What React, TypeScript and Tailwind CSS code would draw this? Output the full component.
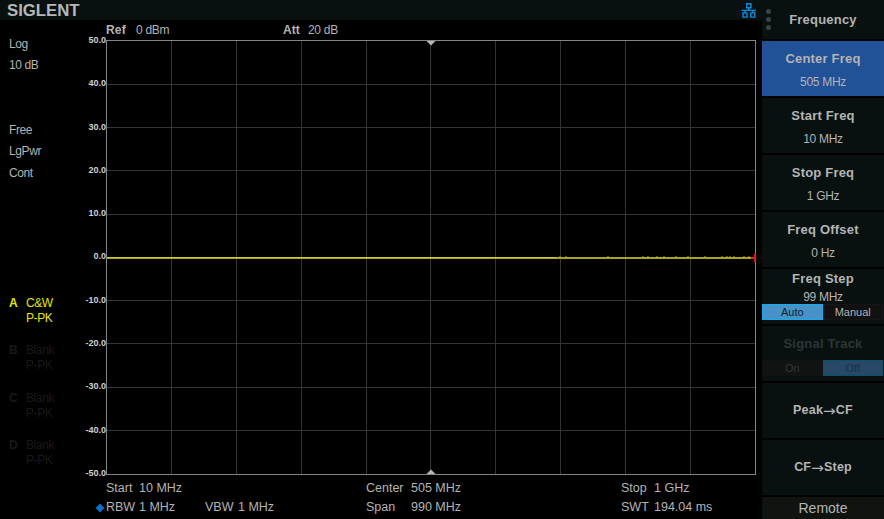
import React from 'react';
import clsx from 'clsx';

interface Trace {
  id: string;
  mode: string;
  active?: boolean;
}

interface MenuItem {
  label: string;
  value?: string;
  selected?: boolean;
}

const levels = ['50.0', '40.0', '30.0', '20.0', '10.0', '0.0', '-10.0', '-20.0', '-30.0', '-40.0', '-50.0'];

const traces: Trace[] = [
  { id: 'A', mode: 'C&W', active: true },
  { id: 'B', mode: 'Blank' },
  { id: 'C', mode: 'Blank' },
  { id: 'D', mode: 'Blank' },
];

const menuItems: MenuItem[] = [
  { label: 'Center Freq', value: '505 MHz', selected: true },
  { label: 'Start Freq', value: '10 MHz' },
  { label: 'Stop Freq', value: '1 GHz' },
  { label: 'Freq Offset', value: '0 Hz' },
];

// Small bumps in the noise floor, as x positions on the plot
const bumps = [453, 459, 501, 536, 541, 550, 557, 569, 581, 598, 615, 620, 623, 627, 637, 642];

const Logo: React.FC = () => (
  <svg width="84" height="20" className="block">
    <text
      x="7"
      y="16.3"
      textLength="72.5"
      lengthAdjust="spacingAndGlyphs"
      className="fill-[#b4b8b6] font-['Liberation_Sans',sans-serif] text-[16px] font-bold"
    >
      SIGLENT
    </text>
  </svg>
);

const LanIcon: React.FC = () => (
  <svg width="16" height="18" viewBox="0 0 16 18" fill="none" stroke="#0a8fe0" strokeWidth="1.4">
    <path d="M5.7 1.7h4.2v4H5.7zM2 10.9h4v4.2H2zM9.8 10.9h4v4.2h-4z" />
    <path d="M7.8 5.7v2.7M0.5 8.4h14.5M4 8.4v2.5M11.8 8.4v2.5" />
  </svg>
);

/**
 * Trace plot with a 10 x 10 graticule
 */
const Plot: React.FC = () => (
  <svg width="652" height="436" className="block">
    {Array.from({ length: 9 }, (_, i) => (
      <g key={i} stroke="#343434" shapeRendering="crispEdges">
        <path d={`M${Math.round((i + 1) * 64.85 + 0.2) + 0.5} 1V434`} />
        <path d={`M1 ${Math.round((i + 1) * 43.3 + 0.3) + 0.5}H649`} />
      </g>
    ))}
    <rect x="0.5" y="0.5" width="649" height="434" fill="none" stroke="#858585" />
    <path d="M320.5 1h9l-4.5 4.5z" fill="#b5b5b5" />
    <path d="M320.5 434h9l-4.5-4.5z" fill="#b5b5b5" />
    <path d="M1 218H646" stroke="#a8a51c" strokeWidth="2" />
    <path d="M1 217.5H450" stroke="#d0cd28" />
    {bumps.map((x) => (
      <rect key={x} x={x} y="216.5" width="2" height="1" fill="#b8b51c" />
    ))}
    <path d="M645 217h3v-3h2v8h-2v-3h-3z" fill="#e01818" />
  </svg>
);

const TraceLabel: React.FC<{ trace: Trace }> = ({ trace }) => (
  <div
    className={clsx(
      'grid h-[47.5px] grid-cols-[17px_1fr] content-start text-[12px] leading-[15px]',
      trace.active ? 'text-[#e6e600]' : 'text-[#191919]'
    )}
  >
    <span className="font-bold">{trace.id}</span>
    <span>{trace.mode}</span>
    <span className="col-start-2">P-PK</span>
  </div>
);

const Toggle: React.FC<{ options: string[]; active: number; disabled?: boolean }> = ({
  options,
  active,
  disabled,
}) => (
  <div className="grid h-4 w-[121px] grid-cols-2 text-center text-[11px] leading-[14px]">
    {options.map((option, i) => (
      <span
        key={option}
        className={clsx(
          'border',
          i === active && !disabled && 'border-[#11aeea] bg-[#4793c9] text-[#102028]',
          i === active && disabled && 'border-[#0b5269] bg-[#254966] text-[#1c3448]',
          i !== active && !disabled && 'border-[#151515] bg-[#111111] text-[#b4b4b4]',
          i !== active && disabled && 'border-[#121414] bg-[#111212] text-[#343838]'
        )}
      >
        {option}
      </span>
    ))}
  </div>
);

const menuLabel = 'text-[13px] leading-4 font-bold tracking-[0.2px]';

export default function App() {
  return (
    <div className="flex h-[519px] w-[884px] overflow-hidden bg-black font-['Liberation_Sans',Arial,sans-serif] text-[#b4b4b4]">
      <main className="w-[762px]">
        <header className="flex h-5 justify-between bg-[#081110] pr-[5px]">
          <Logo />
          <div className="pt-[2px]">
            <LanIcon />
          </div>
        </header>

        <div className="flex">
          {/* Sweep status and traces */}
          <aside className="w-[78px] pl-[9px] text-[12px] leading-[21.6px] tracking-[-0.4px]">
            <div className="pt-[13.6px]">Log</div>
            <div>10 dB</div>
            <div className="pt-[43px]">Free</div>
            <div>LgPwr</div>
            <div>Cont</div>
            <div className="pt-[111px]">
              {traces.map((trace) => (
                <TraceLabel key={trace.id} trace={trace} />
              ))}
            </div>
          </aside>

          <section>
            <div className="flex h-5 pl-[28px] text-[12px] leading-[21px]">
              <span className="w-[30px] font-bold tracking-[0.2px]">Ref</span>
              <span className="w-[147px] tracking-[-0.3px]">0 dBm</span>
              <span className="w-[25px] font-bold">Att</span>
              <span className="tracking-[-0.3px]">20 dB</span>
            </div>

            <div className="flex">
              <div className="-mt-[21px] w-7 text-right text-[9px] leading-[43.3px] font-bold text-[#d0d0d0]">
                {levels.map((level) => (
                  <div key={level}>{level}</div>
                ))}
              </div>
              <Plot />
            </div>

            {/* Frequency and bandwidth readouts */}
            <div className="relative -mt-[16px] grid grid-cols-[33px_66px_33px_128px_45px_210px_33px_auto] pl-[28px] text-[12.5px] leading-[19px] whitespace-nowrap">
              <span>Start</span>
              <span className="col-span-3">10 MHz</span>
              <span>Center</span>
              <span>505 MHz</span>
              <span>Stop</span>
              <span>1 GHz</span>
              <span>RBW</span>
              <span>1 MHz</span>
              <span>VBW</span>
              <span>1 MHz</span>
              <span>Span</span>
              <span>990 MHz</span>
              <span>SWT</span>
              <span>194.04 ms</span>
              <svg width="10" height="10" className="absolute bottom-[4px] left-[17px]">
                <path d="M5 0.5L9.5 5L5 9.5L0.5 5z" fill="#0870c8" />
              </svg>
            </div>
          </section>
        </div>
      </main>

      {/* Soft key menu */}
      <nav className="flex w-[122px] flex-col text-center">
        <div className="flex h-[39px] items-center bg-[#081110]">
          <div className="flex w-3 flex-col items-center gap-[3px]">
            <i className="size-[5px] rounded-full bg-[#36444a]" />
            <i className="size-[5px] rounded-full bg-[#36444a]" />
            <i className="size-[5px] rounded-full bg-[#36444a]" />
          </div>
          <h1 className={clsx(menuLabel, 'w-[98px] pt-px')}>Frequency</h1>
        </div>

        {menuItems.map((item) => (
          <div
            key={item.label}
            className={clsx('mt-[2px] h-[55.2px] pt-[10px]', item.selected ? 'bg-[#215196]' : 'bg-[#081110]')}
          >
            <div className={menuLabel}>{item.label}</div>
            <div className="pt-[7px] text-[12px] leading-4 tracking-[-0.3px]">{item.value}</div>
          </div>
        ))}

        <div className="mt-[2px] h-[55.2px] bg-[#081110] pt-[2px]">
          <div className={menuLabel}>Freq Step</div>
          <div className="pt-[3px] text-[12px] leading-[14px] tracking-[-0.3px]">99 MHz</div>
          <Toggle options={['Auto', 'Manual']} active={0} />
        </div>

        <div className="mt-[2px] h-[55.2px] bg-[#081110] pt-[10px]">
          <div className={clsx(menuLabel, 'pb-2 text-[#2e3534]')}>Signal Track</div>
          <Toggle options={['On', 'Off']} active={1} disabled />
        </div>

        {[['Peak', 'CF'], ['CF', 'Step']].map(([from, to]) => (
          <div
            key={from}
            className="mt-[2px] flex h-[55.2px] items-center justify-center bg-[#081110] text-[12.5px] font-bold tracking-[0.2px]"
          >
            {from}
            <span className="font-['DejaVu_Sans',sans-serif] text-[15px] leading-4 font-normal">→</span>
            {to}
          </div>
        ))}

        <div className="mt-[2px] h-[22px] bg-[#101411] text-[14px] leading-[22px]">Remote</div>
      </nav>
    </div>
  );
}
